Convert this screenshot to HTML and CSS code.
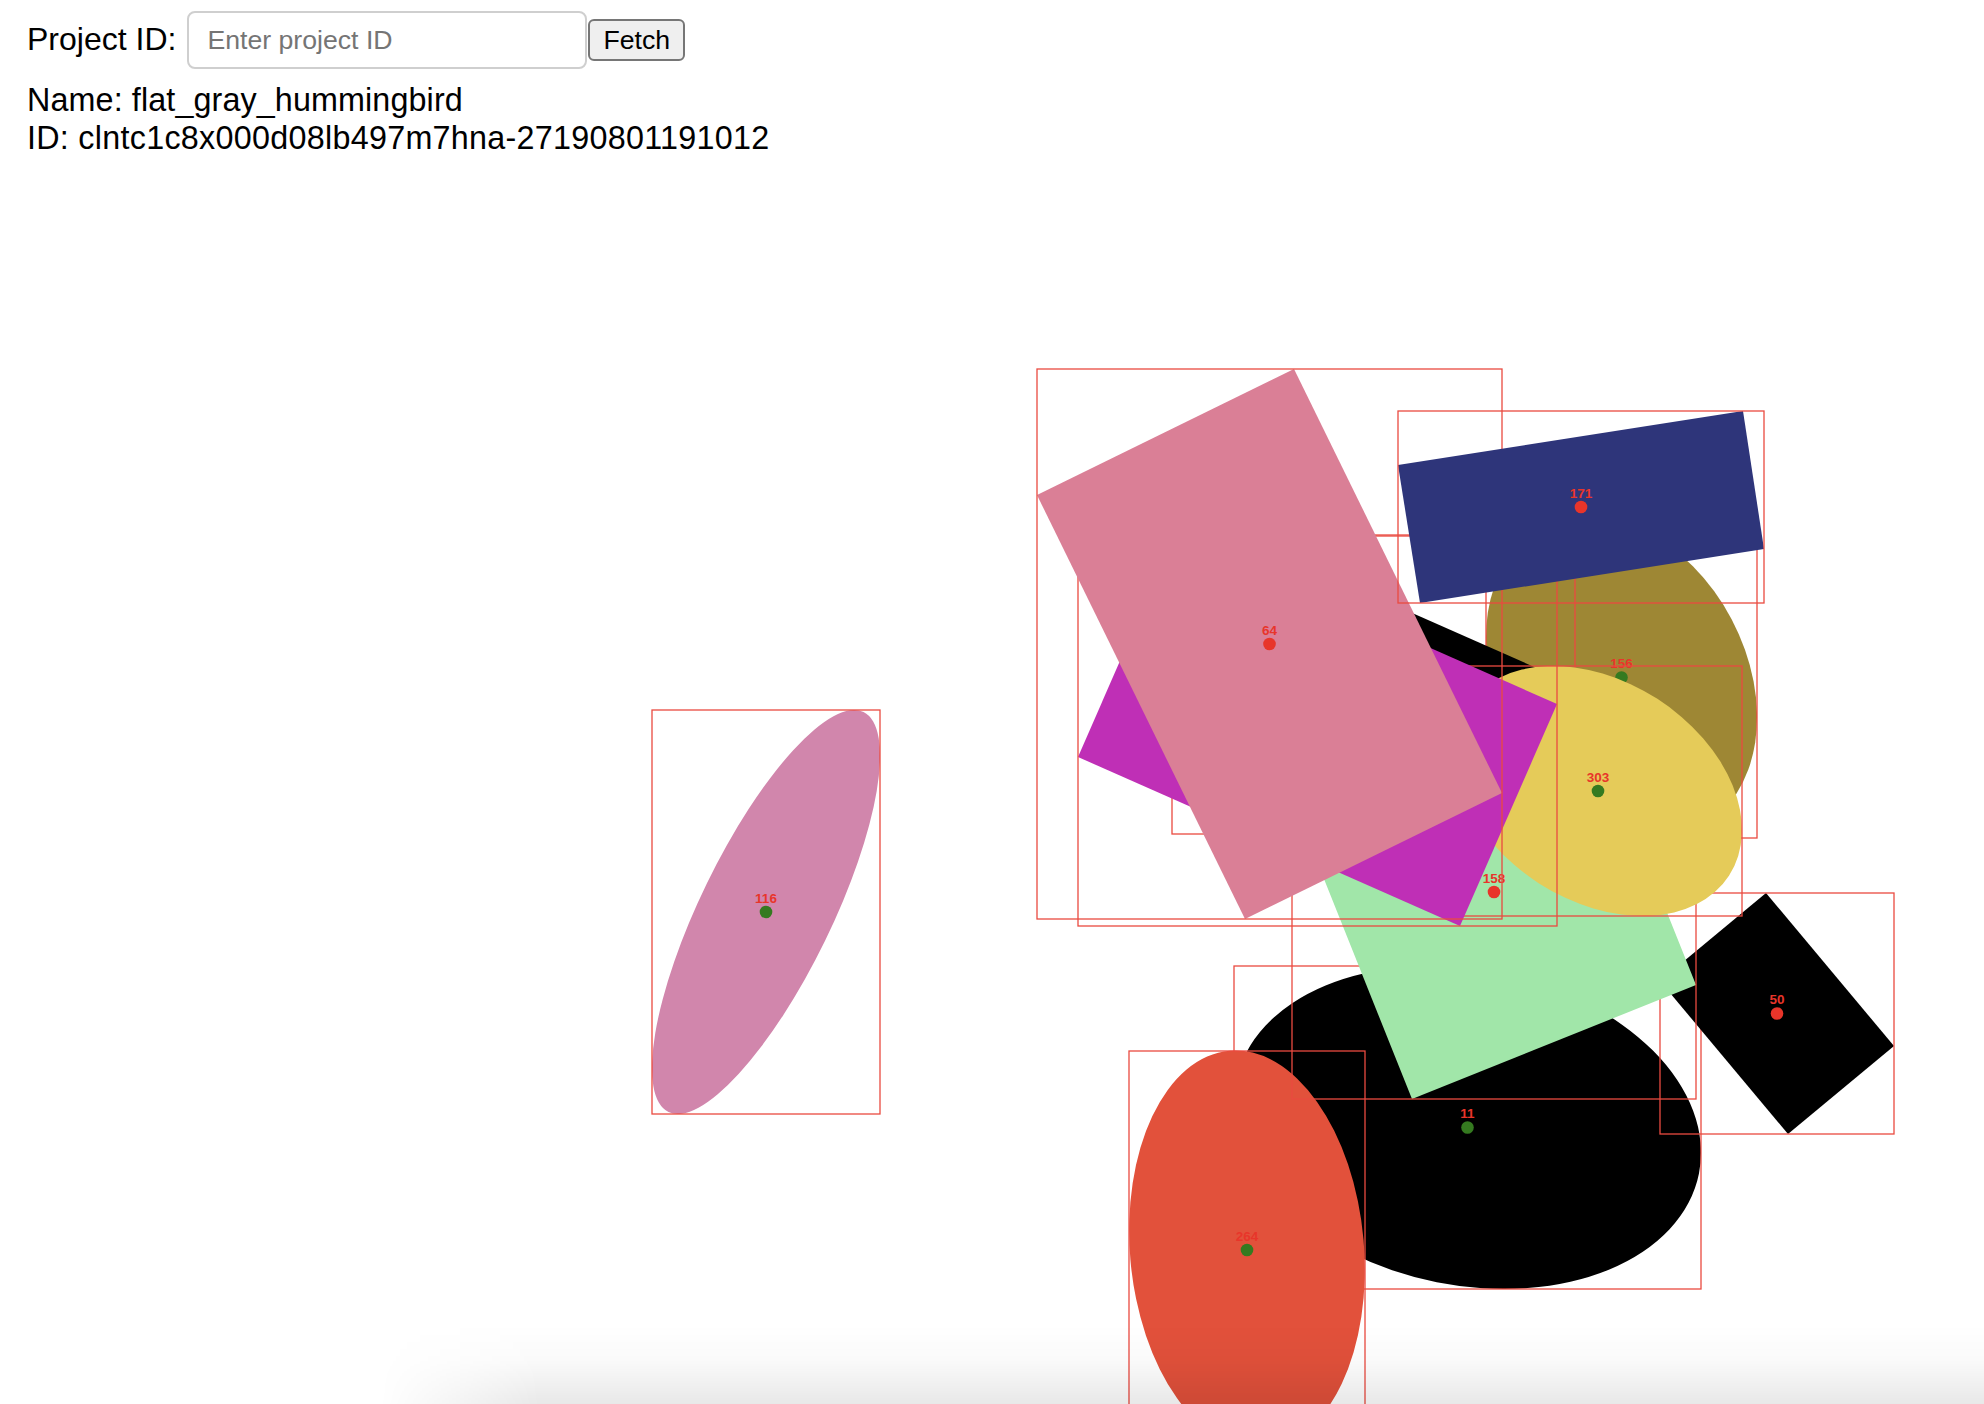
FILE: index.html
```html
<!DOCTYPE html>
<html lang="en">
<head>
<meta charset="utf-8">
<title>Project viewer</title>
<link rel="stylesheet" href="styles.css">
</head>
<body>
<div class="page">
  <div class="fetch-row">
    <label class="pid-label" for="pid">Project ID:</label>
    <input id="pid" class="pid-input" type="text" placeholder="Enter project ID"><button class="fetch-btn" type="button">Fetch</button>
  </div>
  <div class="info">
    <div class="info-line info-name">Name: flat_gray_hummingbird</div>
    <div class="info-line info-id">ID: clntc1c8x000d08lb497m7hna-27190801191012</div>
  </div>
</div>
<svg class="canvas" width="1984" height="1248" viewBox="0 156 1984 1248" xmlns="http://www.w3.org/2000/svg">
  <!-- 116 -->
  <g>
    <ellipse class="s-pink-ell" cx="766" cy="912" rx="222.5" ry="65.7" transform="rotate(-64 766 912)"/>
    <rect class="bbox" x="652" y="710" width="228" height="404"/>
    <circle class="dot-g" cx="766" cy="912" r="6.3"/>
    <text class="lbl" x="766" y="902.5">116</text>
  </g>
  <!-- 11 -->
  <g>
    <ellipse class="s-black" cx="1467.5" cy="1127.5" rx="236" ry="157.8" transform="rotate(11.25 1467.5 1127.5)"/>
    <rect class="bbox" x="1234" y="966" width="467" height="323"/>
    <circle class="dot-g" cx="1467.5" cy="1127.5" r="6.3"/>
    <text class="lbl" x="1467.5" y="1118">11</text>
  </g>
  <!-- 264 -->
  <g>
    <ellipse class="s-red" cx="1247" cy="1250" rx="117" ry="200" transform="rotate(-5 1247 1250)"/>
    <rect class="bbox" x="1129" y="1051" width="236" height="399"/>
    <circle class="dot-g" cx="1247" cy="1250" r="6.3"/>
    <text class="lbl" x="1247" y="1240.5">264</text>
  </g>
  <!-- 50 -->
  <g>
    <polygon class="s-black" points="1766,893 1894,1046 1788,1134 1660,981"/>
    <rect class="bbox" x="1660" y="893" width="234" height="241"/>
    <circle class="dot-r" cx="1777" cy="1013.5" r="6.3"/>
    <text class="lbl" x="1777" y="1004">50</text>
  </g>
  <!-- 158 -->
  <g>
    <polygon class="s-green" points="1576,685 1696,985 1412,1099 1292,799"/>
    <rect class="bbox" x="1292" y="685" width="404" height="414"/>
    <circle class="dot-r" cx="1494" cy="892" r="6.3"/>
    <text class="lbl" x="1494" y="882.5">158</text>
  </g>
  <!-- 156 -->
  <g>
    <ellipse class="s-olive" cx="1621.5" cy="677.5" rx="169.1" ry="124.6" transform="rotate(62.2 1621.5 677.5)"/>
    <rect class="bbox" x="1486" y="517" width="271" height="321"/>
    <circle class="dot-g" cx="1621.5" cy="677.5" r="6.3"/>
    <text class="lbl" x="1621.5" y="668">156</text>
  </g>
  <!-- hidden black rect -->
  <g>
    <polygon class="s-black" points="1238,536 1575,685 1509,834 1172,685"/>
    <rect class="bbox" x="1172" y="536" width="403" height="298"/>
    <circle class="dot-r" cx="1373.5" cy="685" r="6.3"/>
    <text class="lbl" x="1373.5" y="675.5">35</text>
  </g>
  <!-- 303 -->
  <g>
    <ellipse class="s-yellow" cx="1598" cy="791" rx="156" ry="109.6" transform="rotate(32.8 1598 791)"/>
    <rect class="bbox" x="1454" y="666" width="288" height="250"/>
    <circle class="dot-g" cx="1598" cy="791" r="6.3"/>
    <text class="lbl" x="1598" y="781.5">303</text>
  </g>
  <!-- magenta -->
  <g>
    <polygon class="s-magenta" points="1175,535 1557,704 1460,926 1078,757"/>
    <rect class="bbox" x="1078" y="535" width="479" height="391"/>
    <circle class="dot-r" cx="1317.5" cy="730.5" r="6.3"/>
    <text class="lbl" x="1317.5" y="721">92</text>
  </g>
  <!-- 64 -->
  <g>
    <polygon class="s-rose" points="1294,369 1502,793 1245,919 1037,495"/>
    <rect class="bbox" x="1037" y="369" width="465" height="550"/>
    <circle class="dot-r" cx="1269.5" cy="644" r="6.3"/>
    <text class="lbl" x="1269.5" y="634.5">64</text>
  </g>
  <!-- 171 -->
  <g>
    <polygon class="s-navy" points="1743,411 1764,549 1420,603 1398,465"/>
    <rect class="bbox" x="1398" y="411" width="366" height="192"/>
    <circle class="dot-r" cx="1581" cy="507" r="6.3"/>
    <text class="lbl" x="1581" y="497.5">171</text>
  </g>
</svg>
<div class="shade"></div>
</body>
</html>
```
FILE: styles.css
```css
html, body {
  margin: 0;
  padding: 0;
  overflow: hidden;
  background: #ffffff;
}

body {
  width: 1984px;
  height: 1404px;
  font-family: "Liberation Sans", Arial, sans-serif;
  color: #000;
}

.page {
  padding: 11px 0 0 27px;
}

.fetch-row {
  display: flex;
  align-items: flex-start;
}

.pid-label {
  font-size: 32px;
  line-height: 37px;
  margin-top: 10px;
}

.pid-input {
  box-sizing: border-box;
  width: 400px;
  height: 58px;
  margin: 0 0 0 11px;
  padding: 0 16px 0 18px;
  border: 2px solid #cfcfcf;
  border-radius: 8px;
  font-family: "Liberation Sans", Arial, sans-serif;
  font-size: 26.67px;
  color: #000;
  background: #fff;
  outline: none;
}

.pid-input::placeholder {
  color: #757575;
}

.fetch-btn {
  box-sizing: border-box;
  height: 42px;
  margin: 8px 0 0 1px;
  padding: 0 13px;
  border: 2px solid #767676;
  border-radius: 6px;
  background: #efefef;
  font-family: "Liberation Sans", Arial, sans-serif;
  font-size: 26.67px;
  color: #000;
}

.info {
  margin-top: 11px;
  font-size: 32.3px;
  line-height: 38px;
}

.info-line {
  padding-top: 1px;
  margin-bottom: -1px;
}

.info-name {
  letter-spacing: 0.12px;
}

.info-id {
  letter-spacing: 0.28px;
}

.canvas {
  display: block;
}

.bbox {
  fill: none;
  stroke: #ea4a40;
  stroke-width: 1.3;
}

.dot-r { fill: #e8352a; }
.dot-g { fill: #357a20; }

.lbl {
  font-family: "Liberation Sans", Arial, sans-serif;
  font-weight: bold;
  font-size: 13.5px;
  fill: #e8352a;
  text-anchor: middle;
}

.s-pink-ell { fill: #d186ac; }
.s-black { fill: #000000; }
.s-red { fill: #e2513b; }
.s-green { fill: #a1e6a9; }
.s-olive { fill: #9e8734; }
.s-yellow { fill: #e5cb59; }
.s-magenta { fill: #bf2fb6; }
.s-rose { fill: #da7f96; }
.s-navy { fill: #2e357a; }

.shade {
  position: fixed;
  left: 0;
  right: 0;
  bottom: 0;
  height: 80px;
  pointer-events: none;
  background: linear-gradient(to bottom, rgba(0,0,0,0) 0%, rgba(0,0,0,0.02) 45%, rgba(0,0,0,0.09) 100%);
  -webkit-mask-image: linear-gradient(to right, transparent 380px, #000 540px);
  mask-image: linear-gradient(to right, transparent 380px, #000 540px);
}
```
